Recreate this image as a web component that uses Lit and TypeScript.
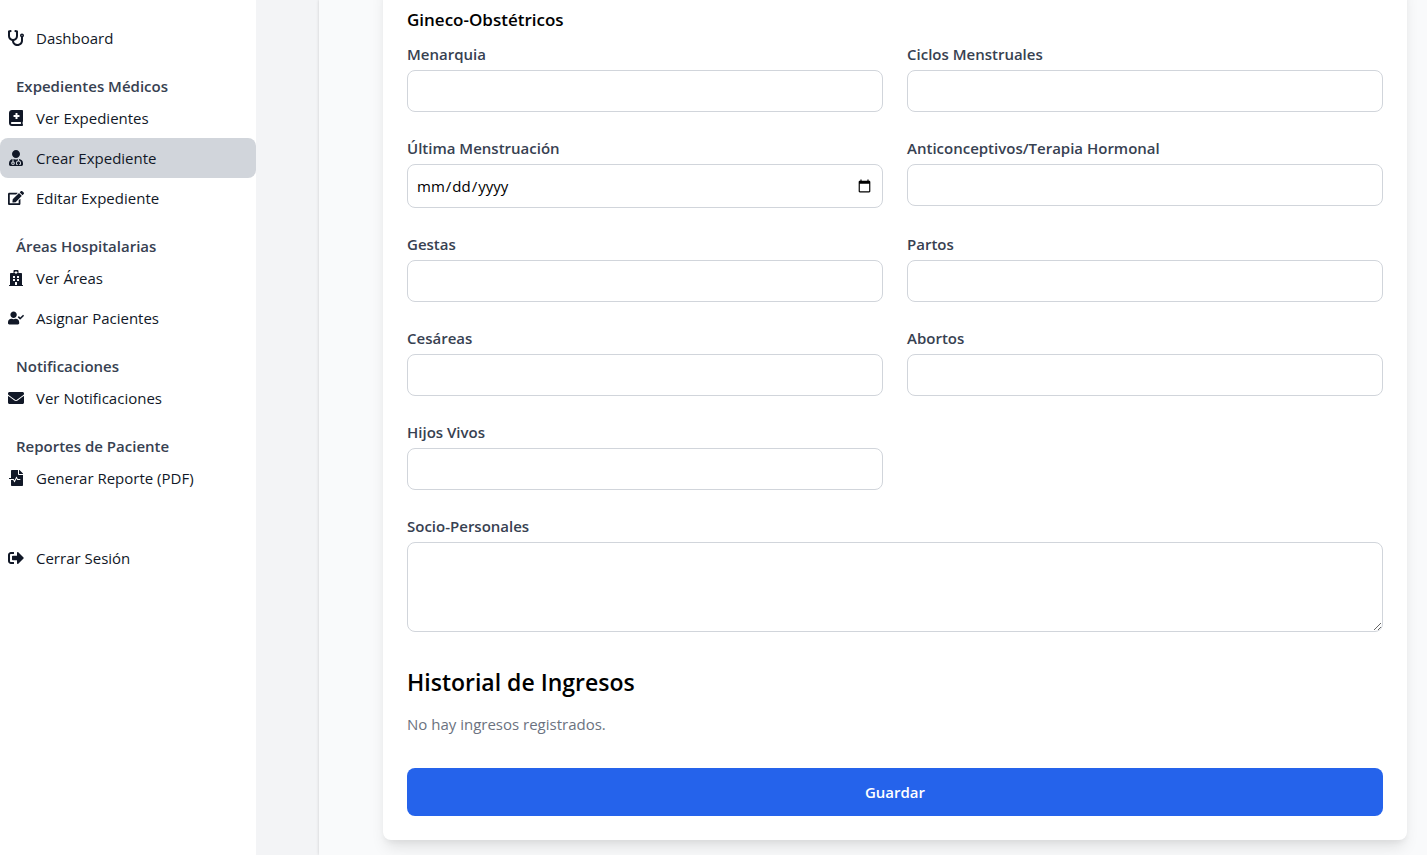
import { LitElement, html, css, svg } from "lit";
import { customElement } from "lit/decorators.js";
import { classMap } from "lit/directives/class-map.js";

interface Icon {
  width: number;
  path: string;
}

const icons: Record<string, Icon> = {
  stethoscope: {
    width: 512,
    path: "M447.1 112c-34.2.5-62.3 28.4-63 62.6-.5 24.3 12.5 45.6 32 56.8V344c0 57.3-50.2 104-112 104-60 0-109.2-44.1-111.9-99.2C265 333.8 320 269.2 320 192V36.6c0-11.4-8.1-21.3-19.3-23.5L237.8.5c-13-2.6-25.6 5.8-28.2 18.8L206.4 35c-2.6 13 5.8 25.6 18.8 28.2l30.7 6.1v121.4c0 52.9-42.2 96.7-95.1 97.2-53.4.5-96.9-42.7-96.9-96V69.4l30.7-6.1c13-2.6 21.4-15.2 18.8-28.2l-3.1-15.7C107.7 6.4 95.1-2 82.1.6L19.3 13C8.1 15.3 0 25.1 0 36.6V192c0 77.3 55.1 142 128.1 156.8C130.7 439.2 208.6 512 304 512c97 0 176-75.4 176-168V231.4c19.1-11.1 32-31.7 32-55.4 0-35.7-29.2-64.5-64.9-64zm.9 80c-8.8 0-16-7.2-16-16s7.2-16 16-16 16 7.2 16 16-7.2 16-16 16z",
  },
  book: {
    width: 448,
    path: "M448 358.4V25.6c0-16-9.6-25.6-25.6-25.6H96C41.6 0 0 41.6 0 96v320c0 54.4 41.6 96 96 96h326.4c12.8 0 25.6-9.6 25.6-25.6v-16c0-6.4-3.2-12.8-9.6-19.2-3.2-16-3.2-60.8 0-73.6 6.4-3.2 9.6-9.6 9.6-19.2zM208 104a8 8 0 0 1 8-8h48a8 8 0 0 1 8 8v56h56a8 8 0 0 1 8 8v48a8 8 0 0 1-8 8h-56v56a8 8 0 0 1-8 8h-48a8 8 0 0 1-8-8v-56h-56a8 8 0 0 1-8-8v-48a8 8 0 0 1 8-8h56zM380.8 448H96c-19.2 0-32-12.8-32-32s16-32 32-32h284.8z",
  },
  doctor: {
    width: 448,
    path: "M224 256c70.7 0 128-57.3 128-128S294.7 0 224 0 96 57.3 96 128s57.3 128 128 128zM104 424c0 13.3 10.7 24 24 24s24-10.7 24-24-10.7-24-24-24-24 10.7-24 24zm216-135.4v49c36.5 7.4 64 39.8 64 78.4v41.7c0 7.6-5.4 14.2-12.9 15.7l-32.2 6.4c-4.3.9-8.5-1.9-9.4-6.3l-3.1-15.7c-.9-4.3 1.9-8.6 6.3-9.4l19.3-3.9V416c0-62.8-96-65.1-96 1.9v26.7l19.3 3.9c4.3.9 7.1 5.1 6.3 9.4l-3.1 15.7c-.9 4.3-5.1 7.1-9.4 6.3l-31.2-4.2c-7.9-1.1-13.8-7.8-13.8-15.9V416c0-38.6 27.5-70.9 64-78.4v-45.2c-2.2.7-4.4 1.1-6.6 1.9-18 6.3-37.3 9.8-57.4 9.8s-39.4-3.5-57.4-9.8c-7.4-2.6-14.9-4.2-22.6-5.2v81.6c23.1 6.9 40 28.1 40 53.4 0 30.9-25.1 56-56 56s-56-25.1-56-56c0-25.3 16.9-46.5 40-53.4v-80.4C48.5 301 0 355.8 0 422.4v44.8C0 491.9 20.1 512 44.8 512h358.4c24.7 0 44.8-20.1 44.8-44.8v-44.8c0-72-56.8-130.3-128-133.8z",
  },
  edit: {
    width: 576,
    path: "M402.6 83.2l90.2 90.2c3.8 3.8 3.8 10 0 13.8L274.4 405.6l-92.8 10.3c-12.4 1.4-22.9-9.1-21.5-21.5l10.3-92.8L388.8 83.2c3.8-3.8 10-3.8 13.8 0zm162-22.9l-48.8-48.8c-15.2-15.2-39.9-15.2-55.2 0l-35.4 35.4c-3.8 3.8-3.8 10 0 13.8l90.2 90.2c3.8 3.8 10 3.8 13.8 0l35.4-35.4c15.2-15.3 15.2-40 0-55.2zM384 346.2V448H64V128h229.8c3.2 0 6.2-1.3 8.5-3.5l40-40c7.6-7.6 2.2-20.5-8.5-20.5H48C21.5 64 0 85.5 0 112v352c0 26.5 21.5 48 48 48h352c26.5 0 48-21.5 48-48V306.2c0-10.7-12.9-16-20.5-8.5l-40 40c-2.2 2.3-3.5 5.3-3.5 8.5z",
  },
  hospital: {
    width: 448,
    path: "M448 492v20H0v-20c0-6.6 5.4-12 12-12h20V120c0-13.3 10.7-24 24-24h88V24c0-13.3 10.7-24 24-24h112c13.3 0 24 10.7 24 24v72h88c13.3 0 24 10.7 24 24v360h20c6.6 0 12 5.4 12 12zM308 192h-40c-6.6 0-12 5.4-12 12v40c0 6.6 5.4 12 12 12h40c6.6 0 12-5.4 12-12v-40c0-6.6-5.4-12-12-12zm-168 64h40c6.6 0 12-5.4 12-12v-40c0-6.6-5.4-12-12-12h-40c-6.6 0-12 5.4-12 12v40c0 6.6 5.4 12 12 12zm104 128h-40c-6.6 0-12 5.4-12 12v84h64v-84c0-6.6-5.4-12-12-12zm64-96h-40c-6.6 0-12 5.4-12 12v40c0 6.6 5.4 12 12 12h40c6.6 0 12-5.4 12-12v-40c0-6.6-5.4-12-12-12zm-116 12c0-6.6-5.4-12-12-12h-40c-6.6 0-12 5.4-12 12v40c0 6.6 5.4 12 12 12h40c6.6 0 12-5.4 12-12v-40zM182 96h26v26a6 6 0 0 0 6 6h20a6 6 0 0 0 6-6V96h26a6 6 0 0 0 6-6V70a6 6 0 0 0-6-6h-26V38a6 6 0 0 0-6-6h-20a6 6 0 0 0-6 6v26h-26a6 6 0 0 0-6 6v20a6 6 0 0 0 6 6z",
  },
  userCheck: {
    width: 640,
    path: "M224 256c70.7 0 128-57.3 128-128S294.7 0 224 0 96 57.3 96 128s57.3 128 128 128zm89.6 32h-16.7c-22.2 10.2-46.9 16-72.9 16s-50.6-5.8-72.9-16h-16.7C60.2 288 0 348.2 0 422.4V464c0 26.5 21.5 48 48 48h352c26.5 0 48-21.5 48-48v-41.6c0-74.2-60.2-134.4-134.4-134.4zM636.6 159.6l-27.8-28.2c-4.6-4.7-12.1-4.7-16.8-.1l-104.8 104-45.5-45.8c-4.6-4.7-12.1-4.7-16.8-.1l-28.1 27.9c-4.7 4.6-4.7 12.1-.1 16.8l81.7 82.3c4.6 4.7 12.1 4.7 16.8.1l141.3-140.2c4.6-4.7 4.7-12.2.1-16.7z",
  },
  envelope: {
    width: 512,
    path: "M502.3 190.8c3.9-3.1 9.7-.2 9.7 4.7V400c0 26.5-21.5 48-48 48H48c-26.5 0-48-21.5-48-48V195.6c0-5 5.7-7.8 9.7-4.7 22.4 17.4 52.1 39.5 154.1 113.6 21.1 15.4 56.7 47.8 92.2 47.6 35.7.3 72-32.8 92.3-47.6 102-74.1 131.6-96.3 154-113.7zM256 320c23.2.4 56.6-29.2 73.4-41.4 132.7-96.3 142.8-104.7 173.4-128.7 5.8-4.5 9.2-11.5 9.2-18.9v-19c0-26.5-21.5-48-48-48H48c-26.5 0-48 21.5-48 48v19c0 7.4 3.4 14.3 9.2 18.9 30.6 23.9 40.7 32.4 173.4 128.7 16.8 12.2 50.2 41.8 73.4 41.4z",
  },
  report: {
    width: 448,
    path: "M288 136V0H88C74.7 0 64 10.7 64 24v232H8c-4.4 0-8 3.6-8 8v16c0 4.4 3.6 8 8 8h140.9c3 0 5.8 1.7 7.2 4.4l19.9 39.8 56.8-113.7c2.9-5.9 11.4-5.9 14.3 0l34.7 69.5H352c8.8 0 16 7.2 16 16s-7.2 16-16 16h-89.9L240 275.8l-56.8 113.7c-2.9 5.9-11.4 5.9-14.3 0L134.1 320H64v168c0 13.3 10.7 24 24 24h336c13.3 0 24-10.7 24-24V160H312c-13.2 0-24-10.8-24-24zm153-31L343.1 7c-4.5-4.5-10.6-7-17-7H320v128h128v-6.1c0-6.3-2.5-12.4-7-16.9z",
  },
  signOut: {
    width: 512,
    path: "M497 273L329 441c-15 15-41 4.5-41-17v-96H152c-13.3 0-24-10.7-24-24v-96c0-13.3 10.7-24 24-24h136V88c0-21.4 25.9-32 41-17l168 168c9.3 9.4 9.3 24.6 0 34zM192 436v-40c0-6.6-5.4-12-12-12H96c-17.7 0-32-14.3-32-32V160c0-17.7 14.3-32 32-32h84c6.6 0 12-5.4 12-12V76c0-6.6-5.4-12-12-12H96c-53 0-96 43-96 96v192c0 53 43 96 96 96h84c6.6 0 12-5.4 12-12z",
  },
};

interface NavItem {
  label: string;
  icon: string;
  active?: boolean;
}

const sections: { title: string; items: NavItem[] }[] = [
  {
    title: "Expedientes Médicos",
    items: [
      { label: "Ver Expedientes", icon: "book" },
      { label: "Crear Expediente", icon: "doctor", active: true },
      { label: "Editar Expediente", icon: "edit" },
    ],
  },
  {
    title: "Áreas Hospitalarias",
    items: [
      { label: "Ver Áreas", icon: "hospital" },
      { label: "Asignar Pacientes", icon: "userCheck" },
    ],
  },
  { title: "Notificaciones", items: [{ label: "Ver Notificaciones", icon: "envelope" }] },
  { title: "Reportes de Paciente", items: [{ label: "Generar Reporte (PDF)", icon: "report" }] },
];

@customElement("app-sidebar")
export class AppSidebar extends LitElement {
  static styles = css`
    :host {
      display: block;
      box-sizing: border-box;
      width: 256px;
      flex: none;
      padding-top: 18px;
      background: #fff;
      color: #111827;
      font-size: 15px;
      line-height: 24px;
    }
    .section {
      margin-top: 16px;
    }
    .title {
      margin: 0;
      padding-left: 16px;
      font-size: 15px;
      font-weight: 600;
      color: #374151;
    }
    .link {
      display: flex;
      align-items: center;
      gap: 12px;
      padding: 8px;
      border-radius: 8px;
      color: inherit;
      text-decoration: none;
    }
    .link:hover,
    .active {
      background: #d1d5db;
    }
    .icon {
      width: 16px;
      height: 16px;
      flex: none;
      fill: currentColor;
    }
    .logout {
      margin-top: 40px;
    }
  `;

  private link(item: NavItem) {
    const icon = icons[item.icon];
    return html`<a class=${classMap({ link: true, active: !!item.active })} href="#">
      <svg class="icon" viewBox="0 0 ${icon.width} 512" aria-hidden="true">
        ${svg`<path fill-rule="evenodd" d=${icon.path}></path>`}
      </svg>
      <span>${item.label}</span>
    </a>`;
  }

  render() {
    return html`<nav>
      ${this.link({ label: "Dashboard", icon: "stethoscope" })}
      ${sections.map(
        (s) => html`<div class="section">
          <h2 class="title">${s.title}</h2>
          ${s.items.map((i) => this.link(i))}
        </div>`
      )}
      <div class="logout">${this.link({ label: "Cerrar Sesión", icon: "signOut" })}</div>
    </nav>`;
  }
}

const fields = [
  { id: "menarquia", label: "Menarquia", type: "text" },
  { id: "ciclos", label: "Ciclos Menstruales", type: "text" },
  { id: "ultima", label: "Última Menstruación", type: "date" },
  { id: "anticonceptivos", label: "Anticonceptivos/Terapia Hormonal", type: "text" },
  { id: "gestas", label: "Gestas", type: "text" },
  { id: "partos", label: "Partos", type: "text" },
  { id: "cesareas", label: "Cesáreas", type: "text" },
  { id: "abortos", label: "Abortos", type: "text" },
  { id: "hijos", label: "Hijos Vivos", type: "text" },
];

@customElement("record-form")
export class RecordForm extends LitElement {
  static styles = css`
    :host {
      display: block;
      box-sizing: border-box;
      margin-top: -24px;
      padding: 30px 24px 24px;
      border-radius: 8px;
      background: #fff;
      color: #000;
      font-size: 15px;
      line-height: 24px;
      box-shadow:
        0 10px 15px -3px rgba(0, 0, 0, 0.1),
        0 4px 6px -2px rgba(0, 0, 0, 0.05);
    }
    .subtitle {
      margin: 0 0 8px;
      font-size: 17px;
      line-height: 28px;
      font-weight: 600;
    }
    .grid {
      display: grid;
      grid-template-columns: 1fr 1fr;
      gap: 24px;
    }
    .field {
      display: flex;
      flex-direction: column;
      align-items: stretch;
      gap: 4px;
    }
    .wide {
      grid-column: 1 / -1;
    }
    .label {
      font-weight: 600;
      color: #374151;
    }
    .control {
      display: block;
      box-sizing: border-box;
      width: 100%;
      height: 42px;
      padding: 8px;
      border: 1px solid #d1d5db;
      border-radius: 8px;
      background: #fff;
      color: #000;
      font: inherit;
    }
    .date {
      height: 44px;
    }
    .area {
      height: 90px;
      resize: vertical;
    }
    .heading {
      margin: 34px 0 14px;
      font-size: 23px;
      line-height: 32px;
      font-weight: 600;
    }
    .empty {
      margin: 0 0 32px;
      color: #6b7280;
    }
    .save {
      display: block;
      width: 100%;
      padding: 12px;
      border: 0;
      border-radius: 8px;
      background: #2563eb;
      color: #fff;
      font: inherit;
      font-weight: 600;
      cursor: pointer;
    }
  `;

  render() {
    return html`<form>
      <h3 class="subtitle">Gineco-Obstétricos</h3>
      <div class="grid">
        ${fields.map(
          (f) => html`<div class="field">
            <label class="label" for=${f.id}>${f.label}</label>
            <input
              class=${classMap({ control: true, date: f.type === "date" })}
              id=${f.id}
              type=${f.type}
            />
          </div>`
        )}
        <div class="field wide">
          <label class="label" for="socio">Socio-Personales</label>
          <textarea class="control area" id="socio"></textarea>
        </div>
      </div>
      <h2 class="heading">Historial de Ingresos</h2>
      <p class="empty">No hay ingresos registrados.</p>
      <button class="save" type="button">Guardar</button>
    </form>`;
  }
}

@customElement("app-root")
export class AppRoot extends LitElement {
  static styles = css`
    :host {
      display: flex;
      min-height: 100vh;
      background: #f3f4f6;
      font-family: "Open Sans", "Noto Sans", sans-serif;
    }
    .main {
      flex: 1;
      min-width: 0;
      box-sizing: border-box;
      margin-left: 63px;
      padding: 0 20px 15px 64px;
      background: #f9fafb;
      box-shadow: 0 0 3px rgba(0, 0, 0, 0.16);
    }
  `;

  render() {
    return html`
      <app-sidebar></app-sidebar>
      <main class="main">
        <record-form></record-form>
      </main>
    `;
  }
}
